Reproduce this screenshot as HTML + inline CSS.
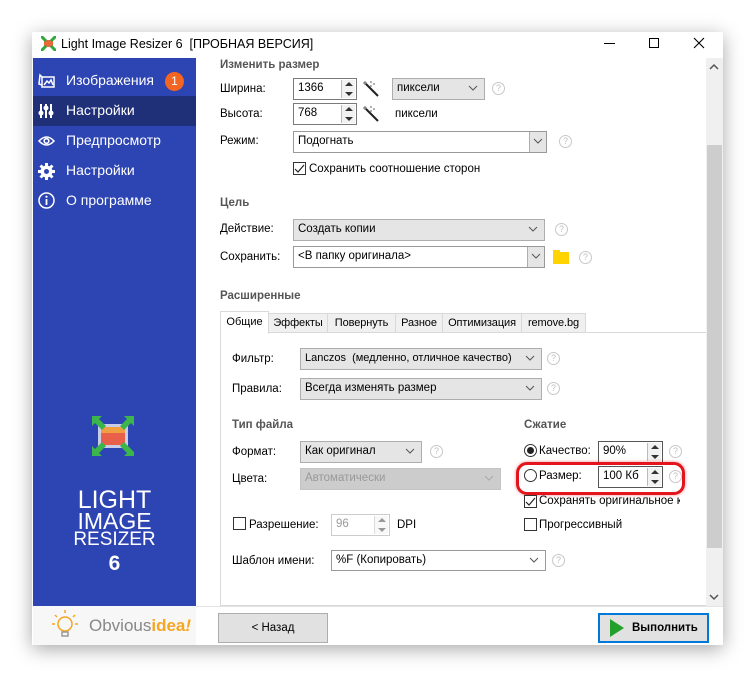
<!DOCTYPE html>
<html><head><meta charset="utf-8">
<style>
*{box-sizing:border-box;margin:0;padding:0}
body{width:755px;height:677px;background:#fff;position:relative;overflow:hidden;font-family:"Liberation Sans",sans-serif;font-size:11.5px;color:#000}
.a{position:absolute}
.win{left:32px;top:32px;width:691px;height:613px;background:#fff;box-shadow:0 4px 18px rgba(0,0,0,.35)}
.t{position:absolute;white-space:nowrap;line-height:14px}
.b{font-weight:bold;color:#555}
.box{position:absolute;border:1px solid #7a7a7a;background:#fff}
.dd{position:absolute;border:1px solid #adadad;background:#e5e5e5}
.dd span,.box span{position:absolute;left:4px;top:3px;white-space:nowrap}
.chev{position:absolute;right:6px;top:5px;width:10px;height:8px}
.btnd{position:absolute;right:0;top:0;width:17px;height:100%;background:#e5e5e5;border-left:1px solid #adadad}
.help{position:absolute;width:13px;height:13px;border:1px solid #c8c8c8;border-radius:50%;color:#c0c0c0;font-size:9px;text-align:center;line-height:11px}
.spin{position:absolute;right:1px;top:1px;width:14px;bottom:1px;border-left:1px solid #bbb;background:#f2f2f2}
.spin:before{content:"";position:absolute;left:3px;top:2px;border:4px solid transparent;border-bottom:4px solid #333;border-top:0}
.spin:after{content:"";position:absolute;left:3px;bottom:2px;border:4px solid transparent;border-top:4px solid #333;border-bottom:0}
.cb{position:absolute;width:13px;height:13px;border:1px solid #333;background:#fff}
.tab{position:absolute;top:313px;height:20px;border:1px solid #d9d9d9;background:#f0f0f0;text-align:center;line-height:18px;font-size:11px;letter-spacing:-.1px}
.side{color:#fff;font-size:14px}
</style></head><body>
<div class="a win"></div>
<svg class="a" style="left:41px;top:36px" width="15" height="15" viewBox="0 0 15 15"><rect x="3" y="4" width="9" height="7" fill="#e86a3a"/><path d="M0 0l5 5M15 0l-5 5M0 15l5-5M15 15l-5-5" stroke="#2fa83c" stroke-width="3"/></svg>
<div class="t" style="left:61px;top:37px;font-size:12.5px">Light Image Resizer 6&nbsp; [ПРОБНАЯ ВЕРСИЯ]</div>
<div class="a" style="left:604px;top:43px;width:11px;height:1px;background:#000"></div>
<div class="a" style="left:649px;top:38px;width:10px;height:10px;border:1px solid #000"></div>
<svg class="a" style="left:693px;top:37px" width="12" height="12"><path d="M1 1L11 11M11 1L1 11" stroke="#000" stroke-width="1.1"/></svg>
<div class="a" style="left:33px;top:58px;width:163px;height:548px;background:#2d44b3"></div>
<div class="a" style="left:33px;top:96px;width:163px;height:30px;background:#1f3079"></div>
<svg class="a" style="left:38px;top:73px" width="17" height="15" viewBox="0 0 17 15" fill="none" stroke="#fff" stroke-width="1.5"><rect x="4" y="4" width="12" height="10"/><path d="M4 4L2 2 1 11 4 12M6 12l3-4 2 2 2-3 2 5"/></svg>
<svg class="a" style="left:38px;top:103px" width="16" height="16" viewBox="0 0 16 16" fill="#fff"><rect x="2" y="1" width="2" height="14"/><rect x="7" y="1" width="2" height="14"/><rect x="12" y="1" width="2" height="14"/><circle cx="3" cy="10" r="2.5"/><circle cx="8" cy="5" r="2.5"/><circle cx="13" cy="10" r="2.5"/></svg>
<svg class="a" style="left:38px;top:135px" width="17" height="12" viewBox="0 0 17 12" fill="none" stroke="#fff" stroke-width="1.6"><path d="M1 6Q8.5-2 16 6Q8.5 14 1 6z"/><circle cx="8.5" cy="6" r="2.3"/></svg>
<svg class="a" style="left:38px;top:163px" width="17" height="17" viewBox="0 0 17 17"><circle cx="8.5" cy="8.5" r="6" fill="#fff"/><g stroke="#fff" stroke-width="3"><path d="M8.5 0v17M0 8.5h17M2.5 2.5l12 12M14.5 2.5l-12 12"/></g><circle cx="8.5" cy="8.5" r="2.5" fill="#2d44b3"/></svg>
<svg class="a" style="left:38px;top:192px" width="17" height="17" viewBox="0 0 17 17"><circle cx="8.5" cy="8.5" r="7.5" fill="none" stroke="#fff" stroke-width="1.5"/><rect x="7.6" y="7" width="1.8" height="6" fill="#fff"/><circle cx="8.5" cy="4.7" r="1.1" fill="#fff"/></svg>
<div class="t side" style="left:66px;top:73px">Изображения</div>
<div class="a" style="left:165px;top:72px;width:19px;height:19px;border-radius:50%;background:#f26522;color:#fff;font-size:12px;text-align:center;line-height:19px">1</div>
<div class="t side" style="left:66px;top:103px">Настройки</div>
<div class="t side" style="left:66px;top:133px">Предпросмотр</div>
<div class="t side" style="left:66px;top:163px">Настройки</div>
<div class="t side" style="left:66px;top:193px">О программе</div>
<svg class="a" style="left:92px;top:416px" width="42" height="40" viewBox="0 0 42 40"><rect x="6" y="8" width="30" height="24" fill="#c9cde8"/><rect x="9" y="11" width="24" height="18" fill="#e8604a"/><rect x="9" y="11" width="24" height="6" fill="#f0a040"/><g fill="#3cb54a"><path d="M0 0h10l-3 3 7 7-4 4-7-7-3 3z"/><path d="M42 0h-10l3 3-7 7 4 4 7-7 3 3z"/><path d="M0 40h10l-3-3 7-7-4-4-7 7-3-3z"/><path d="M42 40h-10l3-3-7-7 4-4 7 7 3 3z"/></g></svg>
<div class="t" style="left:33px;top:487px;width:163px;text-align:center;color:#fff;font-size:25px;line-height:26px">LIGHT</div>
<div class="t" style="left:33px;top:509px;width:163px;text-align:center;color:#fff;font-size:23px;line-height:24px">IMAGE</div>
<div class="t" style="left:33px;top:530px;width:163px;text-align:center;color:#fff;font-size:19px;line-height:20px">RESIZER</div>
<div class="t" style="left:33px;top:553px;width:163px;text-align:center;color:#fff;font-size:21px;line-height:22px;font-weight:bold">6</div>
<div class="a" style="left:33px;top:606px;width:163px;height:39px;background:#f7f7f7"></div>
<svg class="a" style="left:50px;top:607px" width="30" height="36" viewBox="0 0 30 36" fill="none" stroke="#f5a623" stroke-width="1.5"><circle cx="15" cy="17" r="7"/><path d="M15 3v3M5 8l2 2M25 8l-2 2M2 17h3M25 17h3"/><path d="M12 25h6v4h-6z" stroke="#999"/></svg>
<div class="t" style="left:89px;top:616px;font-size:17px;line-height:20px;color:#888">Obvious<span style="color:#f5a623;font-weight:bold">idea<i>!</i></span></div>
<div class="t b" style="left:220px;top:58px">Изменить размер</div>
<div class="t" style="left:220px;top:82px">Ширина:</div>
<div class="t" style="left:220px;top:107px">Высота:</div>
<div class="t" style="left:220px;top:134px">Режим:</div>
<div class="box" style="left:293px;top:78px;width:64px;height:22px"><span>1366</span><div class="spin"></div></div>
<div class="box" style="left:293px;top:103px;width:64px;height:22px"><span>768</span><div class="spin"></div></div>
<svg class="a" style="left:362px;top:80px" width="18" height="18"><path d="M4 4l12 12" stroke="#222" stroke-width="2"/><path d="M3 1v4M1 3h4M9 1v2M12 3v2M8 6h2" stroke="#666"/></svg>
<svg class="a" style="left:362px;top:105px" width="18" height="18"><path d="M4 4l12 12" stroke="#222" stroke-width="2"/><path d="M3 1v4M1 3h4M9 1v2M12 3v2M8 6h2" stroke="#666"/></svg>
<div class="dd" style="left:392px;top:78px;width:93px;height:22px"><span>пиксели</span><svg class="chev" viewBox="0 0 10 8"><path d="M1 2l4 4 4-4" fill="none" stroke="#555"/></svg></div>
<div class="help" style="left:492px;top:82px">?</div>
<div class="t" style="left:395px;top:107px">пиксели</div>
<div class="box" style="left:293px;top:131px;width:254px;height:22px;border-color:#999"><span>Подогнать</span><div class="btnd"><svg class="chev" style="right:3px" viewBox="0 0 10 8"><path d="M1 2l4 4 4-4" fill="none" stroke="#555"/></svg></div></div>
<div class="help" style="left:559px;top:135px">?</div>
<div class="cb" style="left:293px;top:162px"></div><svg class="a" style="left:294px;top:163px" width="11" height="11"><path d="M1 6l3 3 6-7" fill="none" stroke="#222" stroke-width="1.2"/></svg>
<div class="t" style="left:309px;top:162px">Сохранить соотношение сторон</div>
<div class="t b" style="left:220px;top:196px">Цель</div>
<div class="t" style="left:220px;top:222px">Действие:</div>
<div class="t" style="left:220px;top:250px">Сохранить:</div>
<div class="dd" style="left:293px;top:219px;width:252px;height:22px"><span>Создать копии</span><svg class="chev" viewBox="0 0 10 8"><path d="M1 2l4 4 4-4" fill="none" stroke="#555"/></svg></div>
<div class="help" style="left:555px;top:223px">?</div>
<div class="box" style="left:293px;top:246px;width:252px;height:22px;border-color:#999"><span>&lt;В папку оригинала&gt;</span><div class="btnd"><svg class="chev" style="right:3px" viewBox="0 0 10 8"><path d="M1 2l4 4 4-4" fill="none" stroke="#555"/></svg></div></div>
<div class="a" style="left:553px;top:252px;width:16px;height:12px;background:#ffd400"></div><div class="a" style="left:553px;top:250px;width:7px;height:3px;background:#ffd400"></div>
<div class="help" style="left:579px;top:251px">?</div>
<div class="t b" style="left:220px;top:289px">Расширенные</div>
<div class="a" style="left:220px;top:332px;width:500px;height:274px;border:1px solid #d9d9d9;background:#fff"></div>
<div class="tab" style="left:268px;width:60px">Эффекты</div>
<div class="tab" style="left:327px;width:69px">Повернуть</div>
<div class="tab" style="left:395px;width:48px">Разное</div>
<div class="tab" style="left:442px;width:80px">Оптимизация</div>
<div class="tab" style="left:521px;width:65px">remove.bg</div>
<div class="a" style="left:220px;top:311px;width:49px;height:23px;border:1px solid #d9d9d9;border-bottom:none;background:#fff;text-align:center;line-height:20px;font-size:11px">Общие</div>
<div class="t" style="left:232px;top:352px">Фильтр:</div>
<div class="t" style="left:232px;top:382px">Правила:</div>
<div class="dd" style="left:300px;top:348px;width:242px;height:22px"><span style="font-size:11px">Lanczos&nbsp; (медленно, отличное качество)</span><svg class="chev" viewBox="0 0 10 8"><path d="M1 2l4 4 4-4" fill="none" stroke="#555"/></svg></div>
<div class="help" style="left:547px;top:352px">?</div>
<div class="dd" style="left:300px;top:378px;width:242px;height:22px"><span>Всегда изменять размер</span><svg class="chev" viewBox="0 0 10 8"><path d="M1 2l4 4 4-4" fill="none" stroke="#555"/></svg></div>
<div class="help" style="left:547px;top:382px">?</div>
<div class="t b" style="left:232px;top:418px">Тип файла</div>
<div class="t b" style="left:524px;top:418px">Сжатие</div>
<div class="t" style="left:232px;top:445px">Формат:</div>
<div class="t" style="left:232px;top:472px">Цвета:</div>
<div class="dd" style="left:300px;top:441px;width:122px;height:22px"><span>Как оригинал</span><svg class="chev" viewBox="0 0 10 8"><path d="M1 2l4 4 4-4" fill="none" stroke="#555"/></svg></div>
<div class="help" style="left:430px;top:445px">?</div>
<div class="dd" style="left:300px;top:468px;width:201px;height:22px;background:#ccc;border-color:#c4c4c4;color:#999"><span>Автоматически</span><svg class="chev" viewBox="0 0 10 8"><path d="M1 2l4 4 4-4" fill="none" stroke="#aaa"/></svg></div>
<div class="a" style="left:524px;top:444px;width:13px;height:13px;border:1px solid #333;border-radius:50%;background:#fff"></div><div class="a" style="left:527px;top:447px;width:7px;height:7px;border-radius:50%;background:#222"></div>
<div class="t" style="left:539px;top:444px">Качество:</div>
<div class="box" style="left:598px;top:441px;width:65px;height:22px;border-color:#555"><span>90%</span><div class="spin"></div></div>
<div class="help" style="left:669px;top:445px">?</div>
<div class="a" style="left:524px;top:469px;width:13px;height:13px;border:1px solid #333;border-radius:50%;background:#fff"></div>
<div class="t" style="left:539px;top:469px">Размер:</div>
<div class="box" style="left:598px;top:466px;width:65px;height:22px;border-color:#555"><span>100 Кб</span><div class="spin"></div></div>
<div class="help" style="left:669px;top:470px">?</div>
<div class="a" style="left:516px;top:462px;width:169px;height:33px;border:3px solid #e3141b;border-radius:11px;box-shadow:0 0 3px rgba(227,20,27,.5)"></div>
<div class="cb" style="left:524px;top:495px"></div><svg class="a" style="left:525px;top:496px" width="11" height="11"><path d="M1 6l3 3 6-7" fill="none" stroke="#222" stroke-width="1.2"/></svg>
<div class="a" style="left:539px;top:494px;width:141px;height:15px;overflow:hidden"><div class="t" style="left:0;top:0">Сохранять оригинальное качество</div></div>
<div class="cb" style="left:524px;top:518px"></div>
<div class="t" style="left:539px;top:518px">Прогрессивный</div>
<div class="cb" style="left:233px;top:517px"></div>
<div class="t" style="left:249px;top:518px">Разрешение:</div>
<div class="box" style="left:331px;top:514px;width:59px;height:22px;border-color:#ccc;color:#999"><span>96</span><div class="spin" style="opacity:.5"></div></div>
<div class="t" style="left:397px;top:518px">DPI</div>
<div class="t" style="left:232px;top:554px">Шаблон имени:</div>
<div class="box" style="left:331px;top:550px;width:215px;height:21px;border-color:#999"><span>%F (Копировать)</span><svg class="chev" viewBox="0 0 10 8"><path d="M1 2l4 4 4-4" fill="none" stroke="#555"/></svg></div>
<div class="help" style="left:552px;top:554px">?</div>
<div class="a" style="left:706px;top:58px;width:17px;height:548px;background:#f0f0f0"></div>
<div class="a" style="left:707px;top:145px;width:15px;height:403px;background:#cdcdcd"></div>
<svg class="a" style="left:709px;top:63px" width="10" height="8"><path d="M1 6l4-4 4 4" fill="none" stroke="#555" stroke-width="1.5"/></svg>
<svg class="a" style="left:709px;top:593px" width="10" height="8"><path d="M1 2l4 4 4-4" fill="none" stroke="#555" stroke-width="1.5"/></svg>
<div class="a" style="left:196px;top:606px;width:527px;height:39px;background:#fff;border-top:1px solid #e3e3e3"></div>
<div class="a" style="left:218px;top:613px;width:110px;height:30px;background:#e1e1e1;border:1px solid #adadad;text-align:center;line-height:28px">&lt; Назад</div>
<div class="a" style="left:598px;top:613px;width:111px;height:30px;background:#e1e1e1;border:2px solid #0078d7;line-height:26px;font-weight:bold;padding-left:32px">Выполнить</div>
<svg class="a" style="left:610px;top:619px" width="14" height="18"><path d="M0 0L14 9 0 18z" fill="#22a02a"/></svg>
</body></html>
